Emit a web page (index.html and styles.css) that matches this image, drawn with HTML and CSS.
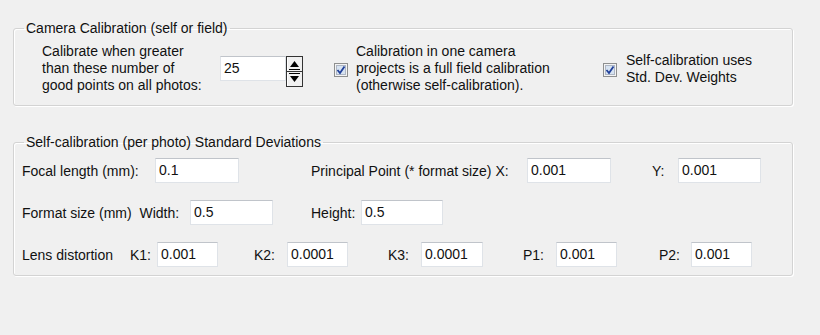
FILE: index.html
```html
<!DOCTYPE html>
<html>
<head>
<meta charset="utf-8">
<link rel="stylesheet" href="styles.css">
</head>
<body>
<div class="dialog">
  <fieldset class="group g1">
    <legend>Camera Calibration (self or field)</legend>
    <div class="row1">
      <div class="lbl3 w-cal">Calibrate when greater<br>than these number of<br>good points on all photos:</div>
      <div class="spin">
        <div class="edit spin-edit">25</div>
        <svg class="spin-btn" width="17" height="31" viewBox="0 0 17 31">
          <rect x="0.5" y="0.5" width="16" height="30" fill="#f0f0f0" stroke="#333"/>
          <line x1="1" y1="15.5" x2="16" y2="15.5" stroke="#333"/>
          <line x1="1.5" y1="1.5" x2="1.5" y2="15" stroke="#fff"/>
          <line x1="1.5" y1="16.5" x2="1.5" y2="30" stroke="#fff"/>
          <polygon points="4,11 13,11 8.5,5" fill="#000"/>
          <polygon points="4,20 13,20 8.5,26" fill="#000"/>
          <line x1="3" y1="13.5" x2="14" y2="13.5" stroke="#000"/>
          <line x1="3" y1="17.5" x2="14" y2="17.5" stroke="#000"/>
        </svg>
      </div>
      <svg class="chk chk1" width="14" height="14" viewBox="0 0 14 14">
        <rect x="0.5" y="0.5" width="13" height="13" fill="#f4f4f4" stroke="#8e8f8f"/>
        <rect x="2.5" y="2.5" width="9" height="9" fill="#d7e3f1" stroke="#aeb6c4"/>
        <path d="M3.5 7 L6 10 L10.5 3.5" fill="none" stroke="#21409a" stroke-width="1.8"/>
      </svg>
      <div class="lbl3 w-full">Calibration in one camera<br>projects is a full field calibration<br>(otherwise self-calibration).</div>
      <svg class="chk chk2" width="14" height="14" viewBox="0 0 14 14">
        <rect x="0.5" y="0.5" width="13" height="13" fill="#f4f4f4" stroke="#8e8f8f"/>
        <rect x="2.5" y="2.5" width="9" height="9" fill="#d7e3f1" stroke="#aeb6c4"/>
        <path d="M3.5 7 L6 10 L10.5 3.5" fill="none" stroke="#21409a" stroke-width="1.8"/>
      </svg>
      <div class="lbl3">Self-calibration uses<br>Std. Dev. Weights</div>
    </div>
  </fieldset>

  <fieldset class="group g2">
    <legend>Self-calibration (per photo) Standard Deviations</legend>
    <div class="rows">
      <div class="row">
        <span class="lbl w133">Focal length (mm):</span>
        <div class="edit w84">0.1</div>
        <span class="lbl ml72 w216">Principal Point (* format size)&nbsp;X:</span>
        <div class="edit w84">0.001</div>
        <span class="lbl ml41 w26">Y:</span>
        <div class="edit w83">0.001</div>
      </div>
      <div class="row">
        <span class="lbl w168">Format size (mm)&nbsp;&nbsp;Width:</span>
        <div class="edit w83">0.5</div>
        <span class="lbl ml38 w50">Height:</span>
        <div class="edit w82">0.5</div>
      </div>
      <div class="row">
        <span class="lbl w108">Lens distortion</span>
        <span class="lbl w27">K1:</span>
        <div class="edit w61">0.001</div>
        <span class="lbl ml36 w33">K2:</span>
        <div class="edit w61">0.0001</div>
        <span class="lbl ml40 w33">K3:</span>
        <div class="edit w62">0.0001</div>
        <span class="lbl ml40 w33">P1:</span>
        <div class="edit w61">0.001</div>
        <span class="lbl ml42 w32">P2:</span>
        <div class="edit w61">0.001</div>
      </div>
    </div>
  </fieldset>
</div>
</body>
</html>
```

FILE: styles.css
```css
html, body {
  margin: 0;
  padding: 0;
  background: #f0f0f0;
}
body {
  width: 820px;
  height: 335px;
  overflow: hidden;
  font-family: "Liberation Sans", Arial, sans-serif;
  font-size: 14px;
  color: #111;
}
.dialog {
  padding: 20px 0 0 13px;
}
.group {
  box-sizing: border-box;
  width: 780px;
  margin: 0;
  padding: 0;
  border: 1px solid #d3d3d3;
  border-radius: 3px;
  box-shadow: inset 1px 1px 0 #fff, 1px 1px 0 #fff;
}
.group legend {
  margin-left: 10px;
  padding: 0 2px;
  line-height: 16px;
  height: 16px;
}
.g1 {
  padding: 7px 0 11px 0;
}
.g2 {
  margin-top: 28px;
  padding: 8px 0 8px 0;
}
.row1 {
  display: flex;
  align-items: center;
  height: 51px;
  margin-left: 28px;
}
.rows {
  margin-left: 8px;
}
.lbl3 {
  line-height: 17px;
  white-space: nowrap;
}
.w-cal { width: 178px; }
.w-full { width: 247px; }
.spin {
  display: flex;
  margin-top: 5px;
}
.spin-edit {
  width: 66px;
  height: 30px;
  line-height: 30px;
}
.spin-btn {
  display: block;
}
.chk {
  display: block;
  flex: none;
}
.chk1 { margin-left: 31px; margin-right: 8px; margin-top: 2px; }
.chk2 { margin-right: 9px; margin-top: 2px; }
.edit {
  box-sizing: border-box;
  height: 25px;
  line-height: 23px;
  background: #fff;
  border: 1px solid #dfe3e8;
  border-top-color: #c0c4ca;
  padding-left: 3px;
  flex: none;
}
.row {
  display: flex;
  align-items: center;
  height: 25px;
}
.row + .row {
  margin-top: 17px;
}
.lbl {
  flex: none;
  white-space: nowrap;
}
.w26 { width: 26px; }
.w27 { width: 27px; }
.w32 { width: 32px; }
.w33 { width: 33px; }
.w50 { width: 50px; }
.w108 { width: 108px; }
.w133 { width: 133px; }
.w168 { width: 168px; }
.w216 { width: 216px; }
.w61 { width: 61px; }
.w62 { width: 62px; }
.w82 { width: 82px; }
.w83 { width: 83px; }
.w84 { width: 84px; }
.ml36 { margin-left: 36px; }
.ml38 { margin-left: 38px; }
.ml40 { margin-left: 40px; }
.ml41 { margin-left: 41px; }
.ml42 { margin-left: 42px; }
.ml72 { margin-left: 72px; }
```
